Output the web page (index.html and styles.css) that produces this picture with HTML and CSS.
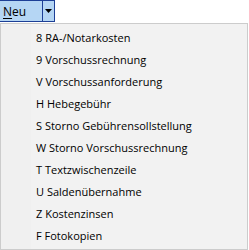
FILE: index.html
```html
<!DOCTYPE html>
<html lang="de">

<head>
  <meta charset="UTF-8">
  <title>Neu</title>
  <link rel="stylesheet" href="styles.css">
</head>

<body>
  <div class="toolbar">
    <div class="split-button">
      <span class="split-label"><u>N</u>eu</span>
      <span class="split-arrow">
        <svg width="7" height="4" viewBox="0 0 7 4"><path d="M0 0h7L3.5 4z" fill="#000"/></svg>
      </span>
    </div>
  </div>

  <ul class="menu">
    <li>8 RA-/Notarkosten</li>
    <li>9 Vorschussrechnung</li>
    <li>V Vorschussanforderung</li>
    <li>H Hebegebühr</li>
    <li>S Storno Gebührensollstellung</li>
    <li>W Storno Vorschussrechnung</li>
    <li>T Textzwischenzeile</li>
    <li>U Saldenübernahme</li>
    <li>Z Kostenzinsen</li>
    <li>F Fotokopien</li>
  </ul>
</body>

</html>
```

FILE: styles.css
```css
    body {
      margin: 0;
      background: #ffffff;
      font-family: "Open Sans", "Noto Sans", sans-serif;
      font-size: 11px;
      color: #000;
    }

    .toolbar {
      display: flex;
      height: 23px;
    }

    .split-button {
      display: flex;
      height: 22px;
      box-sizing: border-box;
      border: 1px solid #1d3f96;
      border-left: none;
      background: #b5d6f4;
    }

    .split-label {
      display: flex;
      align-items: center;
      width: 43px;
      padding-left: 3px;
      box-sizing: border-box;
      border-right: 1px solid #1d3f96;
      font-size: 12px;
    }

    .split-label u {
      text-decoration-thickness: 1px;
      text-underline-offset: 2px;
    }

    .split-arrow {
      display: flex;
      align-items: center;
      justify-content: center;
      width: 11px;
    }

    .menu {
      list-style: none;
      margin: 0;
      padding: 3px 0 2px;
      width: 248px;
      box-sizing: border-box;
      border: 1px solid #cccccc;
      background: linear-gradient(to right, #f0f0f0 30px, #f2f2f2 30px);
    }

    .menu li {
      height: 22px;
      line-height: 22px;
      padding-left: 35px;
    }
```
